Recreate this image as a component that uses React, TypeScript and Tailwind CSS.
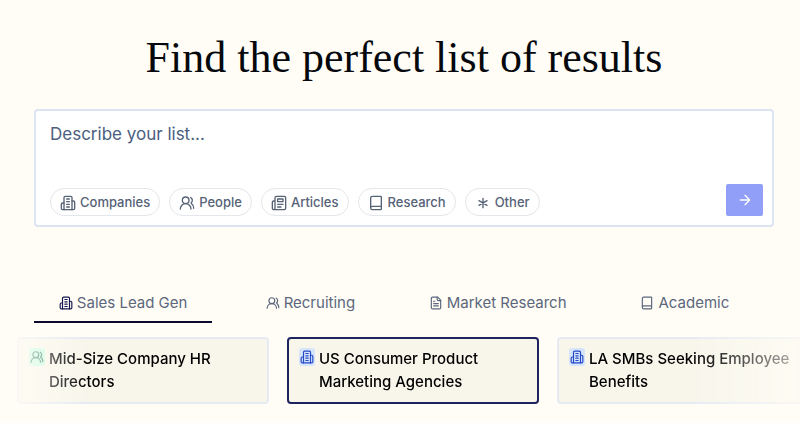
import { useState } from "react";
import type { ReactNode } from "react";

type IconProps = { className?: string; strokeWidth?: number };

function Icon({ className = "size-4", strokeWidth = 2, children }: IconProps & { children: ReactNode }) {
  return (
    <svg
      viewBox="0 0 24 24"
      fill="none"
      stroke="currentColor"
      strokeWidth={strokeWidth}
      strokeLinecap="round"
      strokeLinejoin="round"
      aria-hidden="true"
      className={`shrink-0 ${className}`}
    >
      {children}
    </svg>
  );
}

const BuildingIcon = (p: IconProps) => (
  <Icon {...p}>
    <path d="M6 22V4a2 2 0 0 1 2-2h8a2 2 0 0 1 2 2v18Z" />
    <path d="M6 12H4a2 2 0 0 0-2 2v6a2 2 0 0 0 2 2h2" />
    <path d="M18 9h2a2 2 0 0 1 2 2v9a2 2 0 0 1-2 2h-2" />
    <path d="M10 6h4M10 10h4M10 14h4M10 18h4" />
  </Icon>
);

const PeopleIcon = (p: IconProps) => (
  <Icon {...p}>
    <path d="M18 21a8 8 0 0 0-16 0" />
    <circle cx="10" cy="8" r="5" />
    <path d="M22 20c0-3.37-2-6.5-4-8a5 5 0 0 0-.45-8.3" />
  </Icon>
);

const NewsIcon = (p: IconProps) => (
  <Icon {...p}>
    <path d="M4 22h16a2 2 0 0 0 2-2V4a2 2 0 0 0-2-2H8a2 2 0 0 0-2 2v16a2 2 0 0 1-4 0v-9a2 2 0 0 1 2-2h2" />
    <path d="M18 14h-8M15 18h-5M10 6h8v4h-8z" />
  </Icon>
);

const BookIcon = (p: IconProps) => (
  <Icon {...p}>
    <path d="M4 19.5v-15A2.5 2.5 0 0 1 6.5 2H19a1 1 0 0 1 1 1v18a1 1 0 0 1-1 1H6.5a2.5 2.5 0 0 1 0-5H20" />
  </Icon>
);

const FileIcon = (p: IconProps) => (
  <Icon {...p}>
    <path d="M15 2H6a2 2 0 0 0-2 2v16a2 2 0 0 0 2 2h12a2 2 0 0 0 2-2V7Z" />
    <path d="M14 2v4a2 2 0 0 0 2 2h4M10 9H8M16 13H8M16 17H8" />
  </Icon>
);

const AsteriskIcon = (p: IconProps) => (
  <Icon {...p}>
    <path d="M12 5v14M18 8.5l-12 7M6 8.5l12 7" />
  </Icon>
);

const ArrowIcon = (p: IconProps) => (
  <Icon {...p}>
    <path d="M5 12h14M12 5l7 7-7 7" />
  </Icon>
);

const chips = [
  { label: "Companies", Glyph: BuildingIcon },
  { label: "People", Glyph: PeopleIcon },
  { label: "Articles", Glyph: NewsIcon },
  { label: "Research", Glyph: BookIcon },
  { label: "Other", Glyph: AsteriskIcon },
];

const tabs = [
  { label: "Sales Lead Gen", Glyph: BuildingIcon },
  { label: "Recruiting", Glyph: PeopleIcon },
  { label: "Market Research", Glyph: FileIcon },
  { label: "Academic", Glyph: BookIcon },
];

const examples = [
  { label: "Mid-Size Company HR Directors", Glyph: PeopleIcon, tint: "bg-[#c9fbe3] text-[#2c7a5c]", border: "border-[#e6eaf3]" },
  { label: "US Consumer Product Marketing Agencies", Glyph: BuildingIcon, tint: "bg-[#d6e4fc] text-[#2448c8]", border: "border-[#1d2460]" },
  { label: "LA SMBs Seeking Employee Benefits", Glyph: BuildingIcon, tint: "bg-[#d6e4fc] text-[#2448c8]", border: "border-[#e6eaf3]" },
];

export default function App() {
  const [active, setActive] = useState("Sales Lead Gen");
  const [query, setQuery] = useState("");

  return (
    <main className="min-h-screen overflow-hidden bg-[#fffdf6] pt-8 pb-5 font-['Inter','Liberation_Sans',sans-serif]">
      <div className="pr-[26px] pl-[34px]">
        <h1 className="text-center font-['Liberation_Serif',serif] text-[44px] leading-[52px] text-[#05080c]">
          Find the perfect list of results
        </h1>

        <form
          onSubmit={(e) => e.preventDefault()}
          className="mt-[25px] flex flex-col rounded-[4px] border-2 border-[#dce4f2] bg-white pt-[11px] pr-[9px] pb-[9px] pl-[14px]"
        >
          <textarea
            aria-label="Describe your list"
            placeholder="Describe your list..."
            value={query}
            onChange={(e) => setQuery(e.target.value)}
            className="block h-[62px] w-full resize-none bg-transparent text-[17px] leading-6 text-[#4b6080] outline-none placeholder:text-[#4b6080]"
          />
          <div className="flex items-end justify-between">
            <div className="flex gap-[9px]">
              {chips.map(({ label, Glyph }) => (
                <button
                  key={label}
                  type="button"
                  className="flex h-7 items-center gap-1 rounded-full border border-[#e3e6eb] px-[9px] pt-px text-[13px] font-medium text-[#566276]"
                >
                  <Glyph />
                  {label}
                </button>
              ))}
            </div>
            <button
              type="submit"
              aria-label="Search"
              className="flex h-8 w-[37px] items-center justify-center rounded-xs bg-[#919ff8] text-white"
            >
              <ArrowIcon />
            </button>
          </div>
        </form>

        <div role="tablist" className="mt-[58px] grid grid-cols-4 gap-[9px]">
          {tabs.map(({ label, Glyph }) => (
            <button
              key={label}
              type="button"
              role="tab"
              aria-selected={active === label}
              onClick={() => setActive(label)}
              className={`flex h-[38px] items-start justify-center gap-1 border-b-2 pt-1.5 text-[15px] leading-6 whitespace-nowrap text-[#5c677c] ${
                active === label ? "border-[#080b2e]" : "border-transparent"
              }`}
            >
              <Glyph className={active === label ? "mt-[5px] size-3.5 text-[#14174f]" : "mt-[5px] size-3.5"} />
              {label}
            </button>
          ))}
        </div>
      </div>

      <div className="mt-[14px] ml-[17px] flex gap-[18px] overflow-hidden [mask-image:linear-gradient(to_right,rgba(0,0,0,0.25),black_70px,black_calc(100%-110px),rgba(0,0,0,0.3))]">
        {examples.map(({ label, Glyph, tint, border }) => (
          <button
            key={label}
            type="button"
            className={`flex w-[252px] shrink-0 items-start gap-1 rounded-[4px] border-2 bg-[#f8f6eb] pt-2 pb-[9px] pl-[10px] text-left text-[15px] leading-[23px] font-medium text-black ${border}`}
          >
            <span className={`mt-px flex h-[18px] w-4 shrink-0 items-center justify-center rounded-[3px] ${tint}`}>
              <Glyph className="size-3.5" />
            </span>
            <span>{label}</span>
          </button>
        ))}
      </div>
    </main>
  );
}
